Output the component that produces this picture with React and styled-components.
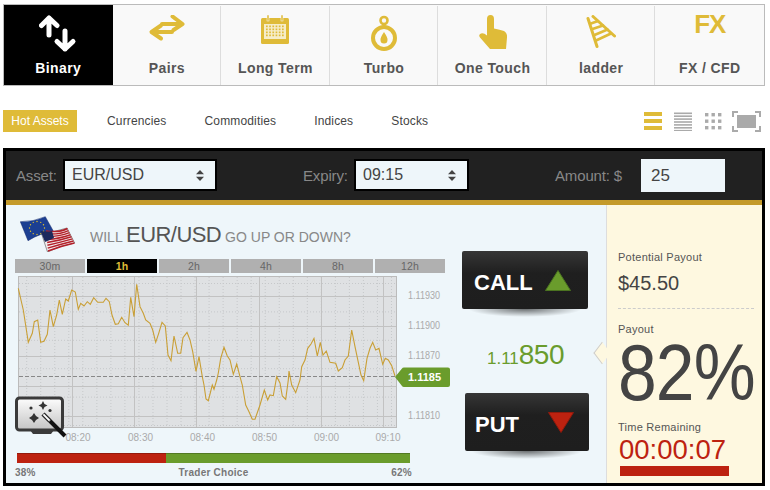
import React from "react";
import styled, { createGlobalStyle } from "styled-components";

const Global = createGlobalStyle`
  html, body { margin: 0; padding: 0; background: #fff; }
  body { font-family: "Liberation Sans", Arial, sans-serif; width: 770px; height: 490px; overflow: hidden; }
  * { box-sizing: border-box; }
`;

const GOLD = "#dfbb38";
const GREEN = "#6a9c2c";
const RED = "#bd2210";

const Page = styled.div`
  padding: 4px 5px 0 3px;
`;

const Nav = styled.nav`
  display: flex;
  height: 82px;
  border: 1px solid #bbb;
  background: #f9f9f9;
`;

const NavItem = styled.div`
  flex: 1;
  position: relative;
  background: ${(p) => (p.$active ? "#000" : "transparent")};
  color: ${(p) => (p.$active ? "#fff" : "#555")};
  font-size: 14px;
  font-weight: 700;
  letter-spacing: 0.38px;
  text-align: center;
  &:not(:first-child):not(:nth-child(2))::before {
    content: "";
    position: absolute;
    left: -1px;
    top: 1px;
    bottom: 0;
    width: 1px;
    background: #ddd;
  }
`;

const NavIcon = styled.div`
  height: 55px;
  display: flex;
  justify-content: center;
  align-items: flex-start;
  padding-top: 10px;
`;

const NavLabel = styled.div`
  line-height: 16px;
`;

const FxMark = styled.div`
  color: ${GOLD};
  font-size: 26px;
  line-height: 24px;
  letter-spacing: -1px;
  margin-top: -3px;
`;

const Toolbar = styled.div`
  display: flex;
  align-items: center;
  height: 22px;
  margin-top: 24px;
`;

const HotAssets = styled.div`
  width: 74px;
  height: 22px;
  background: ${GOLD};
  color: #fff;
  font-size: 12px;
  line-height: 22px;
  text-align: center;
  margin-right: 30px;
`;

const Filter = styled.div`
  font-size: 12px;
  letter-spacing: 0.15px;
  color: #444;
  margin-right: 38px;
`;

const ViewIcons = styled.div`
  margin-left: auto;
  display: flex;
  align-items: center;
  gap: 12px;
  margin-right: 4px;
`;

const FullscreenIcon = styled.svg`
  margin-left: -2px;
`;

const Panel = styled.section`
  margin-top: 16px;
  width: 762px;
  height: 338px;
  border: 3px solid #000;
  display: flex;
  flex-direction: column;
`;

const Header = styled.header`
  height: 54px;
  flex: none;
  background: #212121;
  border-bottom: 5px solid #c49a2a;
  display: flex;
  align-items: center;
  padding: 0 0 1px 10px;
`;

const FieldLabel = styled.label`
  width: ${(p) => p.$w}px;
  margin-left: ${(p) => p.$ml || 0}px;
  font-size: 15px;
  letter-spacing: -0.15px;
  color: #888;
`;

const Select = styled.div`
  width: ${(p) => p.$w}px;
  height: 32px;
  border: 2px solid #000;
  background: #eef6fa;
  color: #444;
  font-size: 16px;
  display: flex;
  align-items: center;
  justify-content: space-between;
  padding: 0 11px 0 7px;
`;

const AmountInput = styled.div`
  width: 84px;
  height: 33px;
  background: #eef6fa;
  color: #444;
  font-size: 17px;
  line-height: 33px;
  padding-left: 10px;
`;

const Body = styled.div`
  flex: 1;
  display: flex;
  min-height: 0;
`;

const Trading = styled.div`
  flex: 1;
  display: flex;
  background: #eef6fa;
`;

const ChartColumn = styled.div`
  width: 439px;
  padding: 11px 0 0 9px;
`;

const QuestionRow = styled.div`
  display: flex;
  align-items: flex-end;
  height: 36px;
  margin-bottom: 7px;
  padding-left: 5px;
`;

const Question = styled.div`
  margin-left: 14px;
  padding-bottom: 3px;
  color: #888;
  font-size: 14px;
  line-height: 24px;
  white-space: nowrap;
  & b {
    font-weight: 400;
    font-size: 22px;
    color: #555;
    letter-spacing: -0.55px;
  }
`;

const Ranges = styled.div`
  display: flex;
  gap: 2px;
  width: 430px;
`;

const Range = styled.div`
  width: 70px;
  height: 14px;
  background: ${(p) => (p.$active ? "#000" : "#b0b0b0")};
  color: ${(p) => (p.$active ? GOLD : "#666")};
  font-weight: ${(p) => (p.$active ? 700 : 400)};
  font-size: 10.5px;
  line-height: 14px;
  text-align: center;
  letter-spacing: 0.2px;
`;

const ChartWrap = styled.div`
  position: relative;
  width: 430px;
  height: 172px;
`;

const ChartSvg = styled.svg`
  display: block;
  overflow: visible;
`;

const WandBadge = styled.svg`
  position: absolute;
  left: 0;
  top: 123px;
`;

const Sentiment = styled.div`
  display: flex;
  width: 393px;
  height: 10px;
  margin: 8px 0 0 2px;
`;

const SentimentPart = styled.div`
  height: 100%;
  background: ${(p) => p.$color};
  box-shadow: inset 0 1px 0 rgba(0, 0, 0, 0.22);
  flex: ${(p) => p.$grow};
`;

const SentimentLabels = styled.div`
  display: flex;
  justify-content: space-between;
  width: 397px;
  margin-top: 4px;
  font-size: 10px;
  line-height: 12px;
  font-weight: 700;
  color: #777;
  letter-spacing: 0.25px;
`;

const Actions = styled.div`
  flex: 1;
  display: flex;
  flex-direction: column;
  padding-top: 46px;
`;

const TradeButton = styled.div`
  position: relative;
  width: ${(p) => p.$w}px;
  height: 58px;
  margin-left: ${(p) => p.$ml}px;
  border-radius: 2px;
  background: linear-gradient(#363636 0%, #1f1f1f 38%, #1e1e1e 100%);
  color: #fff;
  font-size: 22px;
  font-weight: 700;
  display: flex;
  align-items: center;
  justify-content: space-between;
  padding: 0 ${(p) => p.$pr}px 0 ${(p) => p.$pl}px;
  &::after {
    content: "";
    position: absolute;
    left: 6px;
    right: 6px;
    top: 100%;
    height: 8px;
    background: radial-gradient(ellipse at 50% 0, rgba(0, 0, 0, 0.55), rgba(0, 0, 0, 0) 70%);
  }
`;

const TradeLabel = styled.span`
  margin-top: 6px;
`;

const Price = styled.div`
  height: 84px;
  width: 161px;
  text-align: center;
  color: ${GREEN};
  font-size: 17px;
  line-height: 92px;
  & b {
    font-weight: 400;
    font-size: 28px;
    letter-spacing: -0.5px;
  }
`;

const Side = styled.aside`
  position: relative;
  width: 156px;
  flex: none;
  background: #fef8e0;
  border-left: 1px solid #ddd;
  padding: 46px 8px 0 11px;
`;

const Notch = styled.div`
  position: absolute;
  left: -12px;
  top: 141px;
  width: 14px;
  height: 14px;
  background: #fef8e0;
  border-left: 1px solid #ccc;
  border-bottom: 1px solid #ccc;
  transform: rotate(45deg) skew(8deg, 8deg);
`;

const SideLabel = styled.div`
  font-size: 11px;
  line-height: 13px;
  letter-spacing: 0.25px;
  color: #555;
`;

const PayoutValue = styled.div`
  font-size: 20px;
  line-height: 24px;
  color: #444;
  margin-top: 7px;
  padding-bottom: 13px;
  border-bottom: 1px dashed #ccc;
  margin-bottom: 14px;
`;

const Percent = styled.div`
  font-size: 80px;
  line-height: 70px;
  height: 83px;
  color: #444;
  letter-spacing: -1px;
  white-space: nowrap;
  transform: scaleX(0.87);
  transform-origin: left top;
  margin-top: 2px;
`;

const Countdown = styled.div`
  font-size: 27.5px;
  line-height: 29px;
  color: ${RED};
  margin: 1px 0 0 1px;
  white-space: nowrap;
`;

const TimeBar = styled.div`
  width: 109px;
  height: 10px;
  margin: 2px 0 0 2px;
  background: ${RED};
`;

const TRACE =
  "18.3,288.3 23.3,310 28.3,342.3 32.3,333.3 34.3,321.7 37.7,320 40.7,342.3 44,341.3 47.3,334.3 50,310 53.3,326.7 56.7,315 59.3,300 62.3,314.3 65.7,299 68.3,301 71.7,290 75.3,292 78.3,309.3 80.7,303.3 84,306 87.3,301.7 90.3,304.3 93.7,297.7 97.7,302.3 103.3,302.3 106,298.3 109.3,301.7 112,315 115.3,324.3 118.3,323.7 121.7,317.3 125,322.7 128.3,325.3 130.7,297.3 134,316.7 136.7,284.3 140,306.7 143.3,313.3 145.7,320 150,323.3 152.7,330 155.7,342.3 158.7,333.3 162,322.3 165.3,326 168,355 171,360.7 174,336 177.7,353.3 180.7,353.3 183,337.7 187,332.3 190,340 192.7,351.7 196,371.3 199,356.7 202.3,376.7 204,385 206,399 208.3,400.7 212.3,385 214,389.3 216.7,380 218.3,373 220.7,358.3 224,347.3 227.3,356 230,360 233.3,374.3 236.7,364 240,376.7 242.3,385 245.7,405 249,411.7 252.3,419.3 255,419.3 260,405 264.3,390 267.7,400 270,395 273.3,395.7 276.7,376.7 280,383 282.3,396 285.7,399.3 288.3,380 289,371 291.7,385 295.7,392.7 300,380 301.7,366.7 305,360 307.7,348.3 311,344 314,338.3 317.3,356 320.3,342.3 323,355 326.3,351 330,362.3 335.7,363.3 338.3,371 342.3,367.7 345,360 348.3,356 351.7,330 355,346.7 361,375 363.7,380.7 367,358.3 370,348.3 372.7,342.3 375.7,350 379,348.3 382.7,364.3 385.3,358.3 388.3,360 391.7,365.7 395,376";

const range = (start, step, n) => Array.from({ length: n }, (_, i) => start + step * i);

function Chart() {
  return (
    <ChartSvg width="430" height="172" viewBox="15 273 430 172">
      <rect x="18.5" y="276.5" width="378" height="151" fill="#dfe1e3" stroke="#bbb" />
      {range(26.7, 14.03, 27).map((x) => (
        <line key={x} x1={x} x2={x} y1="277" y2="427" stroke="#c6c8ca" strokeDasharray="1 2" />
      ))}
      {range(283.5, 28.4, 6).map((y) => (
        <line key={y} x1="19" x2="396" y1={y} y2={y} stroke="#c6c8ca" strokeDasharray="1 2" />
      ))}
      {[72.5, 134.5, 196.5, 259.5, 321.5, 383.5].map((x) => (
        <line key={x} x1={x} x2={x} y1="277" y2="427" stroke="#c2c2c2" />
      ))}
      {[296.5, 326.5, 356.5, 386.5, 416.5].map((y) => (
        <line key={y} x1="19" x2="396" y1={y} y2={y} stroke="#c2c2c2" />
      ))}
      <line x1="19" x2="396" y1="376.5" y2="376.5" stroke="#888" strokeDasharray="4 2" />
      <polyline points={TRACE} fill="none" stroke="#c99f35" strokeWidth="1.1" />
      <g fontFamily="Liberation Sans, Arial, sans-serif" fontSize="10" fill="#aaa">
        {[
          ["1.11930", 299],
          ["1.11900", 329],
          ["1.11870", 359],
          ["1.11810", 419],
        ].map(([t, y]) => (
          <text key={t} x="408" y={y} textLength="32" lengthAdjust="spacingAndGlyphs">
            {t}
          </text>
        ))}
        {[
          ["08:20", 78],
          ["08:30", 140.5],
          ["08:40", 202.5],
          ["08:50", 264.5],
          ["09:00", 326.5],
          ["09:10", 388],
        ].map(([t, x]) => (
          <text key={t} x={x} y="441" textAnchor="middle">
            {t}
          </text>
        ))}
      </g>
      <path
        d="M395 377 L402 368.5 Q402.5 367.5 404 367.5 L448 367.5 Q450 367.5 450 369.5 L450 385 Q450 387 448 387 L404 387 Q402.5 387 402 386 Z"
        fill={GREEN}
      />
      <text
        x="424.5"
        y="381"
        textAnchor="middle"
        fontFamily="Liberation Sans, Arial, sans-serif"
        fontWeight="700"
        fontSize="11"
        fill="#fff"
      >
        1.1185
      </text>
    </ChartSvg>
  );
}

function Wand() {
  return (
    <WandBadge width="54" height="44" viewBox="15 396 54 44">
      <defs>
        <linearGradient id="screen" x1="0" y1="0" x2="0" y2="1">
          <stop offset="0" stopColor="#fdfdfd" />
          <stop offset="1" stopColor="#c4c4c4" />
        </linearGradient>
      </defs>
      <path d="M30 430 H54 L51 434 H33 Z" fill="#3a3a3a" />
      <rect x="16.5" y="398" width="46" height="32" rx="3" fill="url(#screen)" stroke="#3a3a3a" strokeWidth="3" />
      <path d="M43 401 L44.5 404 L47.5 405.5 L44.5 407 L43 410 L41.5 407 L38.5 405.5 L41.5 404 Z" fill="#333" />
      <path d="M34 413 L36 416 L39 418 L36 420 L34 423 L32 420 L29 418 L32 416 Z" fill="#333" />
      <circle cx="31" cy="408" r="1.6" fill="#333" />
      <circle cx="50" cy="410.5" r="1.6" fill="#333" />
      <line x1="50" y1="421" x2="65" y2="436" stroke="#111" strokeWidth="4" />
      <line x1="43" y1="414" x2="50" y2="421" stroke="#222" strokeWidth="4.4" />
      <line x1="43.4" y1="414.4" x2="49.6" y2="420.6" stroke="#fff" strokeWidth="2" />
    </WandBadge>
  );
}

function Flags() {
  const stripes = range(0, 1 / 7, 8);
  const stars = range(0, Math.PI / 6, 12);
  return (
    <svg width="56" height="36" viewBox="20 216 56 36">
      <path
        d="M20.3 221.7 Q33 222 45.3 216.7 L53.7 231.7 Q40 233 28 240.7 Z"
        fill="#1c3f92"
        stroke="#14296a"
        strokeWidth="0.5"
      />
      {stars.map((a) => (
        <circle key={a} cx={37 + 7.5 * Math.cos(a)} cy={228 + 6.5 * Math.sin(a)} r="0.7" fill="#e8c428" />
      ))}
      <path d="M41 232 Q54 233 67 228 L74.6 243 Q61 245 47.5 252 Z" fill="#f4eeee" stroke="#333" strokeWidth="0.5" />
      {stripes.map((t) => (
        <path
          key={t}
          d={`M${46 + 2 * t} ${231 + 20 * t} Q${59 + 2 * t} ${233 + 13 * t} ${67.5 + 7 * t} ${228.5 + 14.5 * t}`}
          fill="none"
          stroke="#b3202a"
          strokeWidth="1.5"
        />
      ))}
      <path d="M40.5 231 Q47 232 52 231 L54 238 Q50 240 45 242 Z" fill="#1d2a5c" />
    </svg>
  );
}

const NAV = [
  {
    label: "Binary",
    active: true,
    icon: (
      <svg width="38" height="38" viewBox="40 15 38 38" fill="none" stroke="#fff" strokeWidth="5" strokeLinecap="round" strokeLinejoin="round">
        <path d="M50 35 V18 M42.5 25.5 L50 18 L58 25.5" />
        <path d="M66 31 V49 M58 41.5 L66 49 L74 41.5" />
      </svg>
    ),
  },
  {
    label: "Pairs",
    icon: (
      <svg width="38" height="30" viewBox="148 15 38 30" fill="none" stroke={GOLD} strokeWidth="4" strokeLinecap="round" strokeLinejoin="round">
        <path d="M162 24 H182 M172.5 16.5 L182.5 24 L173.5 30" />
        <path d="M172 32 H152 M161 25.5 L151.5 32 L161 38.5" />
      </svg>
    ),
  },
  {
    label: "Long Term",
    icon: (
      <svg width="30" height="30" viewBox="260 15 30 30">
        <rect x="261" y="18" width="28" height="26" rx="1.5" fill={GOLD} />
        <rect x="264" y="24" width="22" height="15" fill="#f6edc8" />
        <rect x="267" y="15" width="2" height="6" fill={GOLD} stroke="#f9f9f9" strokeWidth="0.5" />
        <rect x="281" y="15" width="2" height="6" fill={GOLD} stroke="#f9f9f9" strokeWidth="0.5" />
        {range(266, 3.2, 6).map((x) =>
          range(25.5, 3, 4).map((y) => (
            <rect key={`${x}-${y}`} x={x} y={y} width="1.7" height="1.7" fill={GOLD} />
          ))
        )}
      </svg>
    ),
  },
  {
    label: "Turbo",
    icon: (
      <svg width="30" height="38" viewBox="369 15 30 38" fill="none" stroke={GOLD}>
        <circle cx="384" cy="38" r="11" strokeWidth="4" />
        <circle cx="384" cy="20.5" r="3.5" strokeWidth="2.6" />
        <rect x="382.5" y="23" width="3" height="4" fill={GOLD} stroke="none" />
        <path d="M384 32 Q388 38 387.5 40 A3.5 3.5 0 0 1 380.5 40 Q380 38 384 32 Z" fill={GOLD} stroke="none" />
      </svg>
    ),
  },
  {
    label: "One Touch",
    icon: (
      <svg width="30" height="36" viewBox="478 15 30 36">
        <path
          d="M487 19 Q487 15 490.5 15 Q494 15 494 19 L494 28.5 Q500 29.5 504 31 Q507.5 33 507 37.5 L506 49 L490 49 L480 37.5 Q478 35 481 33.5 Q483.5 32.5 487 35.5 Z"
          fill={GOLD}
        />
      </svg>
    ),
  },
  {
    label: "ladder",
    icon: (
      <svg width="30" height="34" viewBox="586 15 30 34" fill="none" stroke={GOLD} strokeLinecap="round">
        <path d="M588 18.5 L597 46.5 M593 16.5 L614.5 36" strokeWidth="3" />
        <path d="M591 23.5 L598 21 M592.5 29 L603 25.5 M594.5 35 L607.5 29.5 M596 40.5 L611 33.5" strokeWidth="2.6" />
      </svg>
    ),
  },
  { label: "FX / CFD", icon: <FxMark>FX</FxMark> },
];

export default function App() {
  return (
    <Page>
      <Global />
      <Nav>
        {NAV.map((n) => (
          <NavItem key={n.label} $active={n.active}>
            <NavIcon>{n.icon}</NavIcon>
            <NavLabel>{n.label}</NavLabel>
          </NavItem>
        ))}
      </Nav>
      <Toolbar>
        <HotAssets>Hot Assets</HotAssets>
        <Filter>Currencies</Filter>
        <Filter>Commodities</Filter>
        <Filter>Indices</Filter>
        <Filter>Stocks</Filter>
        <ViewIcons>
          <svg width="18" height="20" viewBox="0 0 18 20" fill={GOLD}>
            <rect y="1" width="18" height="4" />
            <rect y="8" width="18" height="4" />
            <rect y="15" width="18" height="4" />
          </svg>
          <svg width="18" height="20" viewBox="0 0 18 20" fill="#aaa">
            {range(1.5, 2.9, 7).map((y) => (
              <rect key={y} y={y} width="18" height="1.6" />
            ))}
          </svg>
          <svg width="18" height="20" viewBox="0 0 18 20" fill="#aaa">
            {range(1, 6.5, 3).map((x) =>
              range(2, 6.5, 3).map((y) => <rect key={`${x}-${y}`} x={x} y={y} width="3.4" height="3.4" />)
            )}
          </svg>
          <FullscreenIcon width="29" height="21" viewBox="0 0 29 21" fill="none">
            <rect x="5" y="4" width="19" height="13" fill="#aaa" />
            <path d="M1 6 V1 H6 M23 1 H28 V6 M28 15 V20 H23 M6 20 H1 V15" stroke="#aaa" strokeWidth="2" />
          </FullscreenIcon>
        </ViewIcons>
      </Toolbar>
      <Panel>
        <Header>
          <FieldLabel $w={47}>Asset:</FieldLabel>
          <Select $w={154}>
            EUR/USD
            <svg width="8" height="11" viewBox="0 0 8 11" fill="#444">
              <path d="M4 0 L8 4.2 H0 Z M4 11 L0 6.8 H8 Z" />
            </svg>
          </Select>
          <FieldLabel $w={51} $ml={86}>
            Expiry:
          </FieldLabel>
          <Select $w={115}>
            09:15
            <svg width="8" height="11" viewBox="0 0 8 11" fill="#444">
              <path d="M4 0 L8 4.2 H0 Z M4 11 L0 6.8 H8 Z" />
            </svg>
          </Select>
          <FieldLabel $w={86} $ml={86}>
            Amount: $
          </FieldLabel>
          <AmountInput>25</AmountInput>
        </Header>
        <Body>
          <Trading>
            <ChartColumn>
              <QuestionRow>
                <Flags />
                <Question>
                  WILL <b>EUR/USD</b> GO UP OR DOWN?
                </Question>
              </QuestionRow>
              <Ranges>
                {["30m", "1h", "2h", "4h", "8h", "12h"].map((r) => (
                  <Range key={r} $active={r === "1h"}>
                    {r}
                  </Range>
                ))}
              </Ranges>
              <ChartWrap>
                <Chart />
                <Wand />
              </ChartWrap>
              <Sentiment>
                <SentimentPart $color={RED} $grow={38} />
                <SentimentPart $color={GREEN} $grow={62} />
              </Sentiment>
              <SentimentLabels>
                <span>38%</span>
                <span>Trader Choice</span>
                <span>62%</span>
              </SentimentLabels>
            </ChartColumn>
            <Actions>
              <TradeButton $w={126} $ml={17} $pr={17} $pl={12}>
                <TradeLabel>CALL</TradeLabel>
                <svg width="26" height="21" viewBox="0 0 26 21">
                  <path d="M13 0.5 L25.5 20.5 H0.5 Z" fill={GREEN} stroke="#4b7320" />
                </svg>
              </TradeButton>
              <Price>
                1.11<b>850</b>
              </Price>
              <TradeButton $w={124} $ml={20} $pr={15} $pl={10}>
                <TradeLabel>PUT</TradeLabel>
                <svg width="26" height="21" viewBox="0 0 26 21">
                  <path d="M0.5 0.5 H25.5 L13 20.5 Z" fill={RED} stroke="#8f1a0c" />
                </svg>
              </TradeButton>
            </Actions>
          </Trading>
          <Side>
            <Notch />
            <SideLabel>Potential Payout</SideLabel>
            <PayoutValue>$45.50</PayoutValue>
            <SideLabel>Payout</SideLabel>
            <Percent>82%</Percent>
            <SideLabel>Time Remaining</SideLabel>
            <Countdown>00:00:07</Countdown>
            <TimeBar />
          </Side>
        </Body>
      </Panel>
    </Page>
  );
}
